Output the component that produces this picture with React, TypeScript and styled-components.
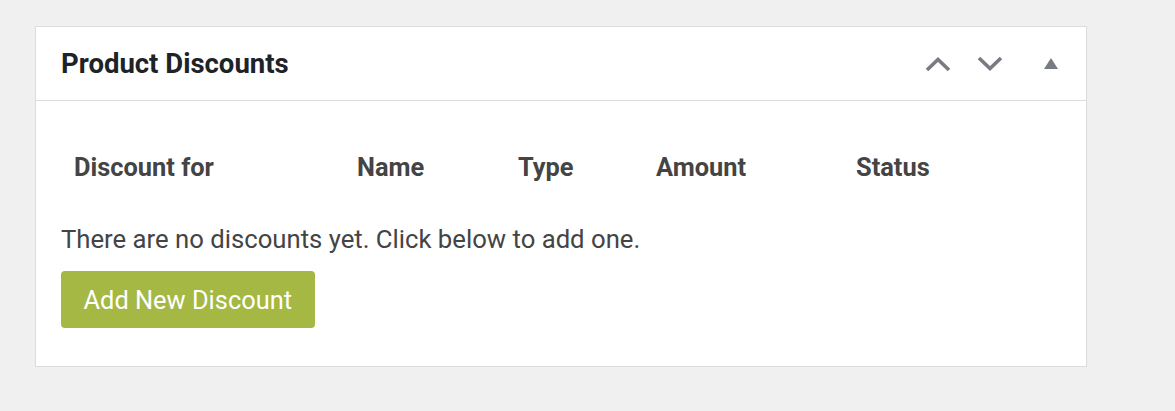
import React from "react";
import styled, { createGlobalStyle } from "styled-components";

const GlobalStyle = createGlobalStyle`
  body {
    margin: 0;
    background: #f0f0f1;
    font-family: Roboto, "Liberation Sans", sans-serif;
  }
`;

const columns = [
  { label: "Discount for", width: 283 },
  { label: "Name", width: 161 },
  { label: "Type", width: 138 },
  { label: "Amount", width: 200 },
  { label: "Status", width: 218 },
];

const App: React.FC = () => {
  return (
    <>
      <GlobalStyle />
      <Page>
        <Postbox>
          <PostboxHeader>
            <Title>Product Discounts</Title>
            <HandleActions>
              <HandleButton $width={52} aria-label="Move up">
                <svg width="26" height="16" viewBox="0 0 26 16">
                  <path d="M2 14 L13 3.5 L24 14" fill="none" stroke="#787c82" strokeWidth="3.6" />
                </svg>
              </HandleButton>
              <HandleButton $width={52} aria-label="Move down">
                <svg width="26" height="16" viewBox="0 0 26 16">
                  <path d="M2 2 L13 12.5 L24 2" fill="none" stroke="#787c82" strokeWidth="3.6" />
                </svg>
              </HandleButton>
              <HandleButton $width={70} aria-label="Toggle panel">
                <svg width="14" height="11" viewBox="0 0 14 11">
                  <path d="M7 0 L14 11 L0 11 Z" fill="#787c82" />
                </svg>
              </HandleButton>
            </HandleActions>
          </PostboxHeader>
          <Inside>
            <Table>
              <thead>
                <tr>
                  {columns.map((col) => (
                    <Th key={col.label} style={{ width: col.width }}>
                      {col.label}
                    </Th>
                  ))}
                </tr>
              </thead>
            </Table>
            <EmptyText>There are no discounts yet. Click below to add one.</EmptyText>
            <AddButton type="button">Add New Discount</AddButton>
          </Inside>
        </Postbox>
      </Page>
    </>
  );
};

export default App;

const Page = styled.div`
  padding: 26px 0 0 35px;
`;

const Postbox = styled.div`
  width: 1050px;
  background: #fff;
  border: 1px solid #dcdcde;
  box-shadow: 0 1px 1px rgba(0, 0, 0, 0.04);
`;

const PostboxHeader = styled.div`
  display: flex;
  align-items: center;
  justify-content: space-between;
  height: 73px;
  padding-left: 25px;
  border-bottom: 1px solid #dcdcde;
`;

const Title = styled.h2`
  margin: 0;
  font-size: 27.5px;
  font-weight: 700;
  color: #1d2327;
`;

const HandleActions = styled.div`
  display: flex;
  align-items: center;
  height: 100%;
`;

const HandleButton = styled.button<{ $width: number }>`
  display: flex;
  align-items: center;
  justify-content: center;
  width: ${(p) => p.$width}px;
  height: 100%;
  padding: 0;
  border: 0;
  background: transparent;
  cursor: pointer;
`;

const Inside = styled.div`
  display: flex;
  flex-direction: column;
  align-items: flex-start;
  padding: 46px 25px 38px;
`;

const Table = styled.table`
  width: 100%;
  border-collapse: collapse;
  table-layout: fixed;
`;

const Th = styled.th`
  box-sizing: border-box;
  height: 40px;
  padding: 0 13px;
  text-align: left;
  font-size: 25.4px;
  font-weight: 700;
  color: #444;
`;

const EmptyText = styled.p`
  margin: 34px 0 0;
  line-height: 36px;
  font-size: 25.7px;
  color: #444;
`;

const AddButton = styled.button`
  margin-top: 14px;
  height: 57px;
  padding: 0 22.5px;
  border: 0;
  border-radius: 4px;
  background: #a5b843;
  color: #fff;
  font-family: Roboto, "Liberation Sans", sans-serif;
  font-size: 25.4px;
  cursor: pointer;
`;
